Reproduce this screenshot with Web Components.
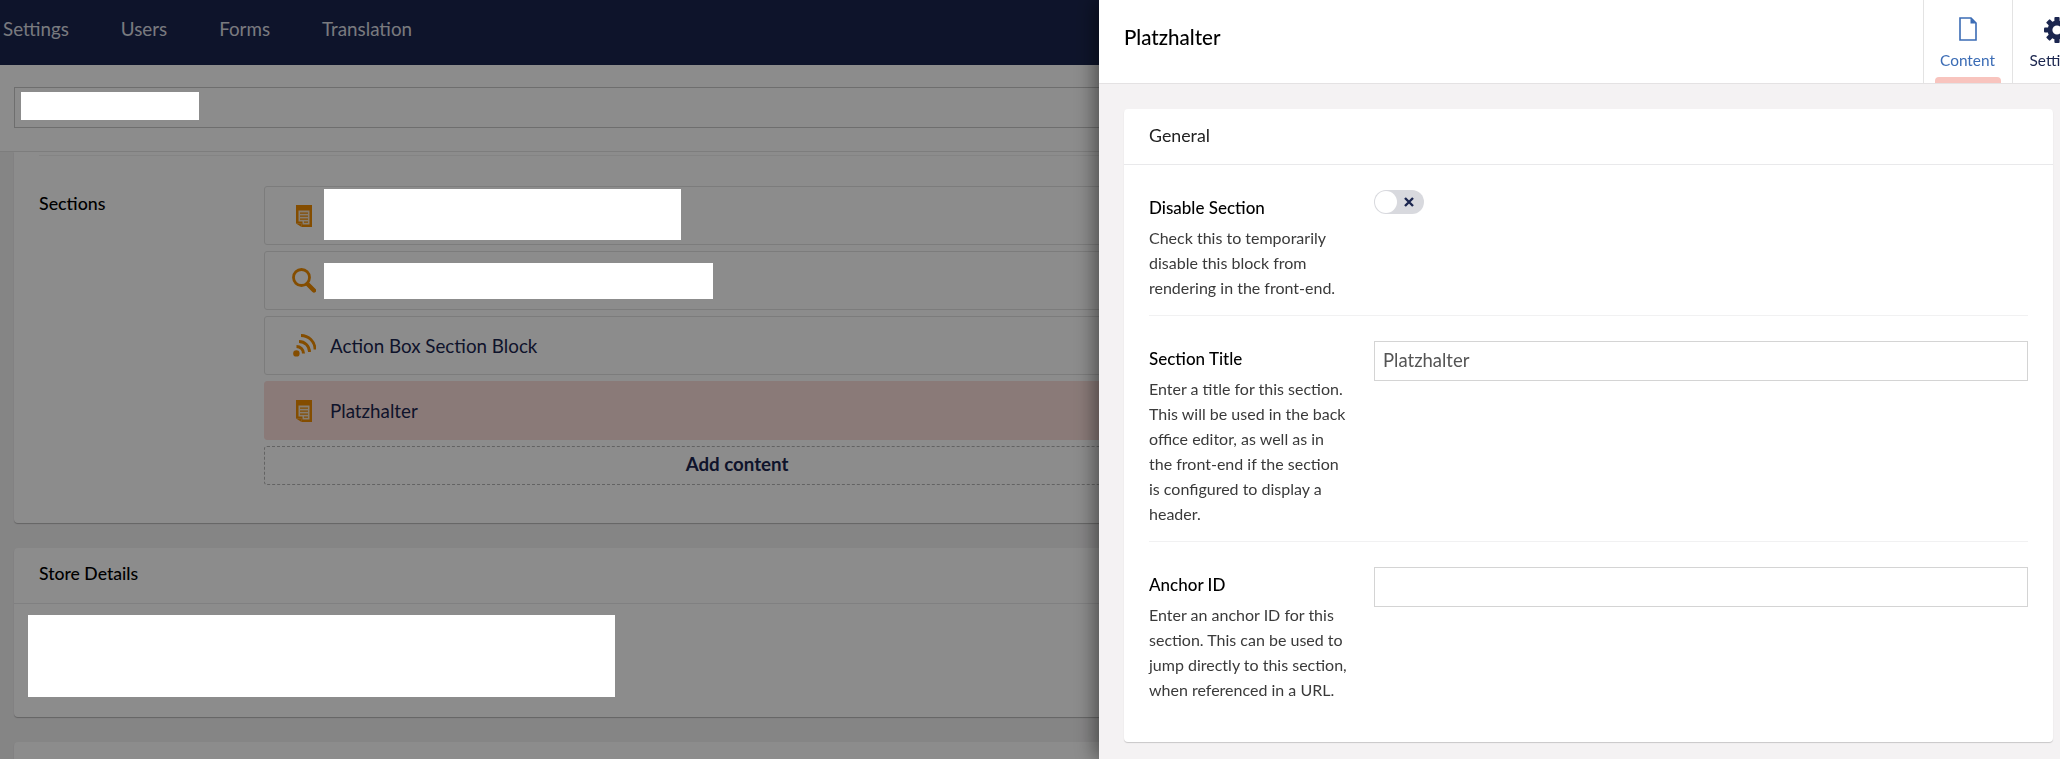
<!DOCTYPE html>
<html>
<head>
<meta charset="utf-8">
<title>Platzhalter</title>
<style>
html, body { margin: 0; height: 100%; overflow: hidden; }
body { font-family: Lato, "Liberation Sans", sans-serif; background: #f3f2f3; color: #1b264f; }
</style>
</head>
<body>
<bo-page>
	<bo-topbar slot="top">
		<bo-navlink>Settings</bo-navlink>
		<bo-navlink>Users</bo-navlink>
		<bo-navlink>Forms</bo-navlink>
		<bo-navlink>Translation</bo-navlink>
	</bo-topbar>
	<bo-namebar slot="top"></bo-namebar>

	<bo-card pad="main">
		<bo-section-list>
			<bo-block icon="doc"><bo-mask w="357" h="51" margin="-2px 0 0 -6px"></bo-mask></bo-block>
			<bo-block icon="search"><bo-mask w="389" h="36" margin="0 0 0 -6px"></bo-mask></bo-block>
			<bo-block icon="rss">Action Box Section Block</bo-block>
			<bo-block icon="doc" active>Platzhalter</bo-block>
		</bo-section-list>
	</bo-card>
	<bo-card heading="Store Details"><bo-mask w="587" h="82"></bo-mask></bo-card>
	<bo-card></bo-card>
</bo-page>
<bo-overlay></bo-overlay>
<bo-panel heading="Platzhalter">
	<bo-tab slot="tabs" icon="file" active>Content</bo-tab>
	<bo-tab slot="tabs" icon="gear">Settings</bo-tab>
	<bo-panel-card heading="General">
		<bo-field label="Disable Section" desc="Check this to temporarily disable this block from rendering in the front-end."><bo-toggle></bo-toggle></bo-field>
		<bo-field label="Section Title" desc="Enter a title for this section. This will be used in the back office editor, as well as in the front-end if the section is configured to display a header."><bo-input value="Platzhalter"></bo-input></bo-field>
		<bo-field label="Anchor ID" desc="Enter an anchor ID for this section. This can be used to jump directly to this section, when referenced in a URL." last><bo-input></bo-input></bo-field>
	</bo-panel-card>
</bo-panel>

<script>
(function() {
	const ORANGE = "#f08c00";
	const ICONS = {
		doc: `<svg width="16" height="22" viewBox="0 0 16 22">
			<path fill="${ORANGE}" d="M0 0h16v22H5.5v-3.5H0z"/>
			<path fill="${ORANGE}" d="M0 18.5h5.5V22z"/>
			<path fill="#f6e6d0" d="M2.5 5.5h11v14h-7v-3h-4z"/>
			<path fill="${ORANGE}" d="M4 7.5h8v1.2H4zM4 10.5h8v1.2H4zM4 13.5h8v1.2H4zM8 16.5h4v1.2H8z"/>
		</svg>`,
		search: `<svg width="24" height="25" viewBox="0 0 24 25">
			<circle cx="9.5" cy="9.5" r="8" fill="none" stroke="${ORANGE}" stroke-width="2.8"/>
			<path d="M15.5 16l6.5 6.5" stroke="${ORANGE}" stroke-width="4.4" stroke-linecap="round"/>
		</svg>`,
		rss: `<svg width="23" height="23" viewBox="0 0 23 23">
			<circle cx="3.4" cy="19.4" r="3.2" fill="${ORANGE}"/>
			<path d="M3.5 12.5a7 7 0 0 1 7 7" fill="none" stroke="${ORANGE}" stroke-width="3"/>
			<path d="M6 7.5a10.5 10.5 0 0 1 10.5 10.5" fill="none" stroke="${ORANGE}" stroke-width="2.8"/>
			<path d="M8 1.5a14 14 0 0 1 14 14" fill="none" stroke="${ORANGE}" stroke-width="2.8"/>
		</svg>`,
		file: `<svg width="18" height="24" viewBox="0 0 18 24">
			<path d="M1 1h11l5 5v17H1z" fill="none" stroke="currentColor" stroke-width="1.6"/>
			<path d="M11.5 1l5.5 5.5h-5.5z" fill="currentColor"/>
		</svg>`,
		gear: `<svg width="26" height="26" viewBox="0 0 26 26">
			<g fill="currentColor">
				<circle cx="13" cy="13" r="9.5"/>
				<rect x="10.4" y="0" width="5.2" height="26" rx="1"/>
				<rect x="10.4" y="0" width="5.2" height="26" rx="1" transform="rotate(45 13 13)"/>
				<rect x="10.4" y="0" width="5.2" height="26" rx="1" transform="rotate(90 13 13)"/>
				<rect x="10.4" y="0" width="5.2" height="26" rx="1" transform="rotate(135 13 13)"/>
			</g>
			<circle cx="13" cy="13" r="4.6" fill="#fff"/>
		</svg>`
	};

	class Base extends HTMLElement {
		constructor() {
			super();
			this.attachShadow({mode: "open"});
		}
		render(html) {
			this.shadowRoot.innerHTML = html;
		}
	}

	class BoPage extends Base {
		connectedCallback() {
			this.render(`<style>
				:host { display: block; height: 759px; overflow: hidden; }
				.body { display: flex; flex-direction: column; gap: 25px; padding: 0 14px; }
			</style>
			<slot name="top"></slot>
			<div class="body"><slot></slot></div>`);
		}
	}

	class BoTopbar extends Base {
		connectedCallback() {
			this.render(`<style>
				:host { display: flex; align-items: center; gap: 52px; height: 65px; padding: 0 0 8px 3px; box-sizing: border-box; background: #1b264f; }
			</style><slot></slot>`);
		}
	}

	class BoNavlink extends Base {
		connectedCallback() {
			this.render(`<style>
				:host { display: block; font-size: 18.8px; color: #dcdee6; }
			</style><slot></slot>`);
		}
	}

	class BoNamebar extends Base {
		connectedCallback() {
			this.render(`<style>
				:host { display: block; height: 87px; box-sizing: border-box; padding: 22px 14px 0; background: #fff; border-bottom: 1px solid #e4e4e4; }
				.box { box-sizing: border-box; height: 41px; border: 1px solid #c8c8c8; padding: 4px 6px; }
			</style>
			<div class="box"><bo-mask w="178" h="28"></bo-mask></div>`);
		}
	}

	// redaction blocks stay pure white, above the backdrop
	class BoMask extends Base {
		connectedCallback() {
			const w = this.getAttribute("w"), h = this.getAttribute("h");
			const margin = this.getAttribute("margin") || "0";
			this.render(`<style>
				:host { display: block; position: relative; z-index: 2; width: ${w}px; height: ${h}px; margin: ${margin}; background: #fff; }
			</style>`);
		}
	}

	class BoCard extends Base {
		connectedCallback() {
			const heading = this.getAttribute("heading");
			const main = this.getAttribute("pad") === "main";
			const head = heading ? `<div class="head">${heading}</div>` : "";
			const cls = main ? "main" : heading ? "details" : "empty";
			this.render(`<style>
				:host { display: block; background: #fff; border-radius: 0 0 4px 4px; box-shadow: 0 1px 1px rgba(0,0,0,.25); }
				:host(:not([pad])) { border-radius: 4px; }
				.head { box-sizing: border-box; height: 56px; line-height: 52px; padding: 0 25px; font-size: 17.6px; font-weight: 500; color: #000; border-bottom: 1px solid #e9e9eb; }
				.details { padding: 11px 14px 20px; }
				.main { display: grid; grid-template-columns: 225px 946px; padding: 0 25px 38px; }
				.rule { grid-column: 1 / -1; height: 1px; margin: 3px 0 30px; background: #f0f0f0; }
				.empty { height: 60px; }
				.label { font-size: 17.8px; color: #000; font-weight: 500; padding-top: 6px; }
			</style>
			${head}
			<div class="${cls}">
				${main ? `<div class="rule"></div><div class="label">Sections</div>` : ""}
				<slot></slot>
			</div>`);
		}
	}

	class BoSectionList extends Base {
		connectedCallback() {
			this.render(`<style>
				:host { display: flex; flex-direction: column; gap: 6px; }
				.add { display: flex; align-items: center; justify-content: center; height: 39px; padding-bottom: 3px; box-sizing: border-box; border: 1px dashed #b4b4b4; border-radius: 3px; font-size: 18.7px; font-weight: 700; color: #1b264f; }
			</style>
			<slot></slot>
			<div class="add">Add content</div>`);
		}
	}

	class BoBlock extends Base {
		connectedCallback() {
			const icon = ICONS[this.getAttribute("icon")] || "";
			this.render(`<style>
				:host { display: flex; align-items: center; height: 59px; box-sizing: border-box; border: 1px solid #e2e2e2; border-radius: 3px; font-size: 18.8px; color: #1b264f; }
				:host([active]) { background: #fbdfdb; border-color: #fbdfdb; }
				.icon { flex: 0 0 60px; display: flex; justify-content: center; padding-left: 18px; box-sizing: border-box; margin-right: 5px; }
			</style>
			<span class="icon">${icon}</span><slot></slot>`);
		}
	}

	class BoOverlay extends Base {
		connectedCallback() {
			this.render(`<style>
				:host { position: fixed; inset: 0; z-index: 1; background: rgba(0,0,0,.45); }
			</style>`);
		}
	}

	class BoPanel extends Base {
		connectedCallback() {
			this.render(`<style>
				:host { position: fixed; top: 0; right: 0; bottom: 0; z-index: 3; width: 961px; display: flex; flex-direction: column; background: #f4f2f3; box-shadow: -3px 0 20px rgba(0,0,0,.5); overflow: hidden; }
				.head { flex: 0 0 84px; box-sizing: border-box; display: flex; align-items: stretch; background: #fff; border-bottom: 1px solid #e4e2e3; }
				h1 { flex: 1; margin: 0; padding: 0 0 10px 25px; align-self: center; font-size: 20.5px; font-weight: 500; color: #000; }
				.tabs { display: flex; margin-right: -41px; }
				.content { padding: 25px 7px 0 25px; }
			</style>
			<div class="head">
				<h1>${this.getAttribute("heading")}</h1>
				<div class="tabs"><slot name="tabs"></slot></div>
			</div>
			<div class="content"><slot></slot></div>`);
		}
	}

	class BoTab extends Base {
		connectedCallback() {
			const icon = ICONS[this.getAttribute("icon")] || "";
			this.render(`<style>
				:host { position: relative; display: flex; flex-direction: column; align-items: center; width: 89px; box-sizing: border-box; padding-top: 17px; border-left: 1px solid #e3e3e3; font-size: 15.4px; color: #1b264f; }
				:host([active]) { color: #3b6cb5; }
				.icon { height: 26px; display: block; }
				.label { margin-top: 8px; margin-left: -1px; }
				:host([active]) .bar { position: absolute; left: 11px; right: 11px; bottom: 0; height: 6px; background: #f8c4be; border-radius: 4px 4px 0 0; }
			</style>
			<span class="icon">${icon}</span>
			<span class="label"><slot></slot></span>
			<span class="bar"></span>`);
		}
	}

	class BoPanelCard extends Base {
		connectedCallback() {
			this.render(`<style>
				:host { display: block; background: #fff; border-radius: 4px; box-shadow: 0 1px 1px rgba(0,0,0,.18); }
				.head { box-sizing: border-box; height: 56px; line-height: 52px; padding: 0 25px; font-size: 17.8px; color: #222; border-bottom: 1px solid #e9e9eb; }
				.fields { padding: 0 25px; }
			</style>
			<div class="head">${this.getAttribute("heading")}</div>
			<div class="fields"><slot></slot></div>`);
		}
	}

	class BoField extends Base {
		connectedCallback() {
			this.render(`<style>
				:host { display: grid; grid-template-columns: 225px 1fr; padding: 25px 0 15px; border-bottom: 1px solid #f1f1f2; }
				:host([last]) { border-bottom: 0; padding-bottom: 40px; }
				.label { font-size: 17px; line-height: 22px; font-weight: 500; color: #000; margin: 7px 0 6px; }
				.desc { width: 200px; font-size: 16px; line-height: 25px; color: #3a3a3a; }
			</style>
			<div>
				<div class="label">${this.getAttribute("label")}</div>
				<div class="desc">${this.getAttribute("desc")}</div>
			</div>
			<div><slot></slot></div>`);
		}
	}

	class BoToggle extends Base {
		connectedCallback() {
			this.render(`<style>
				:host { display: block; position: relative; width: 50px; height: 24px; border-radius: 12px; background: #d8d9de; }
				.knob { position: absolute; left: 1px; top: 1px; width: 22px; height: 22px; border-radius: 50%; background: #fff; }
				svg { position: absolute; right: 10px; top: 7px; }
			</style>
			<span class="knob"></span>
			<svg width="10" height="10" viewBox="0 0 10 10"><path d="M1 1l8 8M9 1l-8 8" stroke="#1b264f" stroke-width="2.4"/></svg>`);
		}
	}

	class BoInput extends Base {
		connectedCallback() {
			const value = this.getAttribute("value") || "";
			this.render(`<style>
				:host { display: block; }
				input { display: block; width: 100%; height: 40px; box-sizing: border-box; border: 1px solid #d4d4d4; padding: 0 8px 2px; outline: 0; font: 18.5px Lato, "Liberation Sans", sans-serif; color: #555; background: #fff; }
			</style>
			<input type="text" value="${value}">`);
		}
	}

	const defs = {
		"bo-page": BoPage, "bo-topbar": BoTopbar, "bo-navlink": BoNavlink, "bo-namebar": BoNamebar,
		"bo-mask": BoMask, "bo-card": BoCard, "bo-section-list": BoSectionList, "bo-block": BoBlock,
		"bo-overlay": BoOverlay, "bo-panel": BoPanel, "bo-tab": BoTab, "bo-panel-card": BoPanelCard,
		"bo-field": BoField, "bo-toggle": BoToggle, "bo-input": BoInput
	};
	Object.keys(defs).forEach(name => customElements.define(name, defs[name]));
})();
</script>
</body>
</html>
